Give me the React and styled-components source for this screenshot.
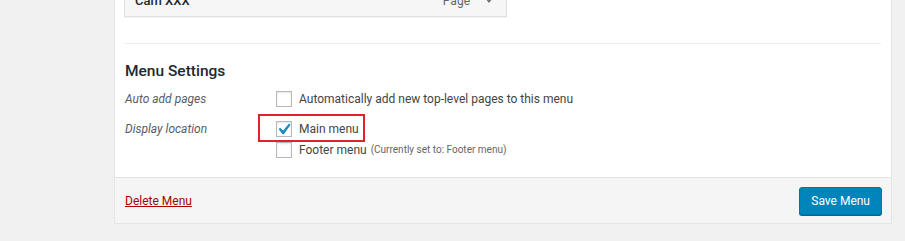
import styled, { createGlobalStyle } from 'styled-components'

const GlobalStyle = createGlobalStyle`
  html, body {
    margin: 0;
    padding: 0;
    background: #f1f1f1;
    overflow: hidden;
  }
  body {
    font-family: Roboto, "Open Sans", "Liberation Sans", sans-serif;
    font-size: 12px;
    color: #23282d;
  }
`

const Checkbox = ({ checked }) => (
  <Box>
    {checked && (
      <CheckMark width='23' height='23' viewBox='0 0 20 20'>
        <path d='M14.83 4.89l1.34.94-5.81 8.38H9.02L5.78 9.67l1.34-1.25 2.57 2.4z' fill='#1e8cbe' />
      </CheckMark>
    )}
  </Box>
)

export default function App() {
  return (
    <>
      <GlobalStyle />
      <Panel>
        <Body>
          <MenuItem>
            <ItemTitle>Cam XXX</ItemTitle>
            <ItemType>
              Page
              <Caret />
            </ItemType>
          </MenuItem>
          <Divider />
          <Heading>Menu Settings</Heading>
          <SettingsGrid>
            <Label>Auto add pages</Label>
            <Options>
              <Option>
                <Checkbox />
                Automatically add new top-level pages to this menu
              </Option>
            </Options>
            <Label>Display location</Label>
            <Options $gap={5}>
              <Option>
                <Checkbox checked />
                Main menu
                <Highlight />
              </Option>
              <Option>
                <Checkbox />
                Footer menu
                <Note>(Currently set to: Footer menu)</Note>
              </Option>
            </Options>
          </SettingsGrid>
        </Body>
        <Footer>
          <DeleteLink href='#'>Delete Menu</DeleteLink>
          <SaveButton>Save Menu</SaveButton>
        </Footer>
      </Panel>
    </>
  )
}

const Panel = styled.div`
  width: 776px;
  margin: -24px 0 0 114px;
  background: #fff;
  border: 1px solid #e5e5e5;
  border-top: none;
  box-shadow: 0 1px 1px rgba(0, 0, 0, 0.04);
`

const Body = styled.div`
  padding: 0 10px 19px 9px;
`

const MenuItem = styled.div`
  width: 383px;
  height: 41px;
  box-sizing: border-box;
  display: flex;
  align-items: center;
  justify-content: space-between;
  padding: 8px 13px 0 10px;
  background: #f6f6f6;
  border: 1px solid #dfdfdf;
  box-shadow: 0 1px 1px rgba(0, 0, 0, 0.04);
`

const ItemTitle = styled.span`
  font-weight: 500;
  font-size: 13px;
  color: #23282d;
`

const ItemType = styled.span`
  display: flex;
  align-items: center;
  gap: 15px;
  color: #666;
  font-size: 12px;
`

const Caret = styled.span`
  width: 0;
  height: 0;
  border-left: 4px solid transparent;
  border-right: 4px solid transparent;
  border-top: 5px solid #72777c;
`

const Divider = styled.div`
  height: 1px;
  background: #eee;
  margin-top: 26px;
  margin-left: 1px;
`

const Heading = styled.h3`
  margin: 18px 0 11px 1px;
  font-size: 15.5px;
  font-weight: 500;
  color: #23282d;
`

const SettingsGrid = styled.div`
  display: grid;
  grid-template-columns: 151px 1fr;
  row-gap: 14px;
  margin-left: 1px;
`

const Label = styled.div`
  font-style: italic;
  color: #555d66;
  line-height: 16px;
`

const Options = styled.div`
  display: flex;
  flex-direction: column;
  gap: ${(p) => p.$gap || 0}px;
`

const Option = styled.label`
  position: relative;
  display: flex;
  align-items: center;
  gap: 7px;
  line-height: 16px;
  color: #444;
  width: max-content;
`

const Box = styled.span`
  position: relative;
  flex: none;
  width: 16px;
  height: 16px;
  box-sizing: border-box;
  border: 1px solid #b4b9be;
  background: #fff;
  box-shadow: inset 0 1px 2px rgba(0, 0, 0, 0.1);
`

const CheckMark = styled.svg`
  position: absolute;
  left: -5px;
  top: -4px;
`

const Highlight = styled.span`
  position: absolute;
  left: -18px;
  top: -7px;
  right: -6px;
  bottom: -5px;
  border: 2px solid #e2202e;
  pointer-events: none;
`

const Note = styled.span`
  font-size: 10px;
  color: #666;
  margin-left: -3px;
`

const Footer = styled.div`
  height: 46px;
  box-sizing: border-box;
  display: flex;
  align-items: center;
  justify-content: space-between;
  padding: 0 9px 0 10px;
  background: #f5f5f5;
  border-top: 1px solid #e5e5e5;
`

const DeleteLink = styled.a`
  color: #a00;
  text-decoration: underline;
  font-size: 12px;
`

const SaveButton = styled.button`
  height: 28px;
  padding: 0 11px;
  font-family: inherit;
  font-size: 12px;
  color: #fff;
  background: #0085ba;
  border: 1px solid #0073aa;
  border-radius: 3px;
  box-shadow: 0 1px 0 #006799;
  cursor: pointer;
`
